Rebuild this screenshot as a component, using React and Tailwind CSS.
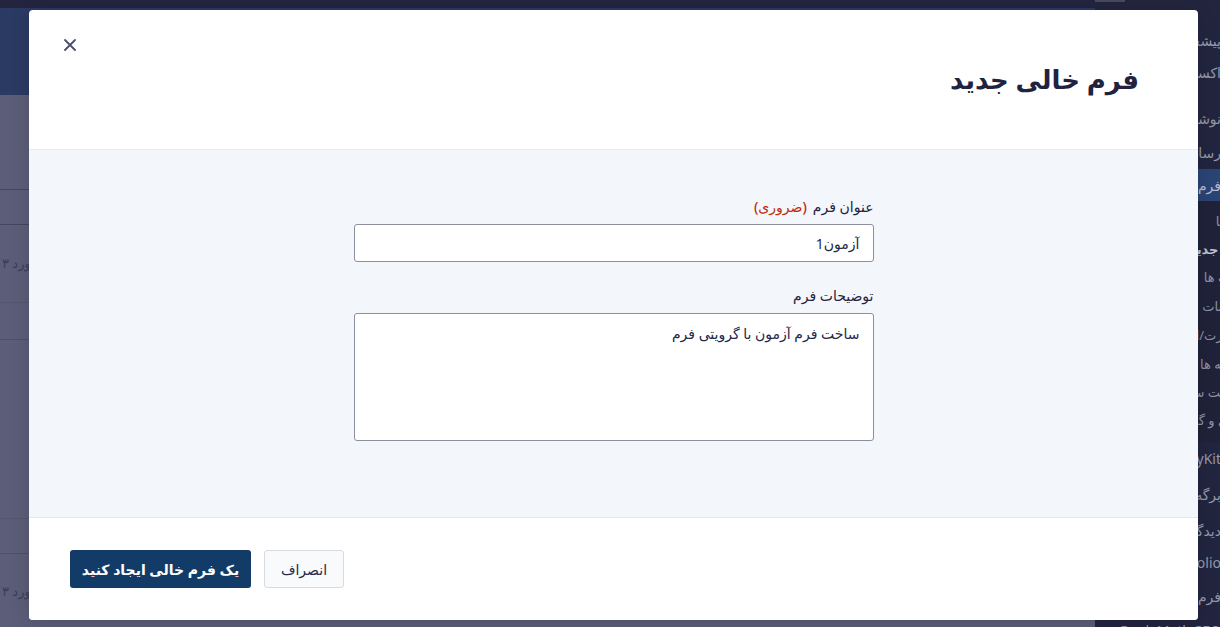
import React from "react";

function SideItem({ children, className = "" }) {
  return (
    <div className={"flex shrink-0 items-center justify-start whitespace-nowrap pr-[39px] text-[14px] text-[#9598ab] " + className}>
      {children}
    </div>
  );
}

function SubItem({ children, className = "h-[28px]" }) {
  return (
    <div className={"flex shrink-0 items-center justify-start whitespace-nowrap pr-[12px] text-[13px] text-[#8e91a5] " + className}>
      {children}
    </div>
  );
}

export default function App() {
  return (
    <div
      className="relative h-[627px] w-[1220px] overflow-hidden bg-[#5c5d78]"
      style={{ fontFamily: "'Noto Sans', 'DejaVu Sans', sans-serif" }}
    >
      {/* background admin page */}
      <div className="flex h-full w-[1260px] flex-col">
        <div className="flex h-[8px] shrink-0 bg-[#23253f]">
          <div className="ml-[1095px] h-[2px] w-[30px] bg-[#484a62]" />
        </div>
        <div className="flex min-h-0 flex-1">
          {/* main area */}
          <div className="flex w-[1095px] shrink-0 flex-col">
            <div className="h-[87px] shrink-0 bg-[#2b3a63]" />
            <div className="flex-1 bg-[#5c5d78]">
              <div className="h-[94px]" />
              <div className="h-[36px] border-y border-[#45465f]" dir="rtl">
                <div className="flex h-full w-[28px] items-center justify-start overflow-visible whitespace-nowrap text-[13px] text-[#3b3d58]">
                  ورودی‌ها
                </div>
              </div>
              <div className="h-[78px] border-b border-[#55566f]" dir="ltr">
                <div className="flex h-full items-center pl-[2px] text-[13px] text-[#3b3d58]">
                  <span dir="rtl">مورد ۳</span>
                </div>
              </div>
              <div className="h-[37px] border-b border-[#4f5069]" />
              <div className="h-[179px] border-b border-[#55566f]" />
              <div className="h-[35px] border-b border-[#4f5069]" />
              <div className="flex h-[76px] items-center pl-[2px] text-[13px] text-[#3b3d58]">
                <span dir="rtl">مورد ۳</span>
              </div>
            </div>
          </div>
          {/* sidebar */}
          <div className="flex w-[165px] shrink-0 flex-col overflow-hidden bg-[#22253f]" dir="rtl">
            <div className="h-[16px] shrink-0" />
            <SideItem className="h-[32px]">پیشخوان</SideItem>
            <SideItem className="h-[32px]">اکسیر</SideItem>
            <div className="h-[13px] shrink-0" />
            <SideItem className="h-[34px]">نوشته‌ها</SideItem>
            <SideItem className="h-[34px]">رسانه</SideItem>
            <SideItem className="h-[32px] bg-[#2b4476] text-[#b9bdd0]">فرم‌ها</SideItem>
            <div className="flex shrink-0 flex-col bg-[#1f2239] py-[7px]">
              <SubItem>فرم‌ها</SubItem>
              <SubItem className="h-[28px] font-bold text-[#bfc2d2]">فرم جدید</SubItem>
              <SubItem>پیامک ها</SubItem>
              <SubItem className="h-[30px]">تنظیمات</SubItem>
              <SubItem>ایمپورت/اکسپورت</SubItem>
              <SubItem className="h-[29px]">افزونه ها</SubItem>
              <SubItem>وضعیت سیستم</SubItem>
              <SubItem>تحلیل و گزارش</SubItem>
            </div>
            <SideItem className="h-[32px]">MyKit</SideItem>
            <SideItem className="h-[40px]">برگه‌ها</SideItem>
            <SideItem className="h-[32px]">دیدگاه‌ها</SideItem>
            <SideItem className="h-[32px]">Portfolio</SideItem>
            <SideItem className="h-[36px]">فرم تماس</SideItem>
            <SideItem className="h-[32px]">Rank Math SEO</SideItem>
          </div>
        </div>
      </div>

      {/* modal */}
      <div
        dir="rtl"
        className="absolute left-[29px] top-[10px] flex h-[610px] w-[1169px] flex-col overflow-hidden rounded-[4px] bg-white shadow-[0_4px_20px_rgba(0,0,0,0.15)]"
      >
        <div className="relative flex h-[140px] shrink-0 items-center border-b border-[#e8ebf1] pr-[59px]">
          <h1 className="mt-[-2px] text-[26px] font-semibold leading-none text-[#1f2340]">فرم خالی جدید</h1>
          <button className="absolute left-[33px] top-[27px] flex h-[16px] w-[16px] items-center justify-center text-[#4a4e6a]" aria-label="close">
            <svg width="12" height="12" viewBox="0 0 12 12" fill="none" stroke="currentColor" strokeWidth="1.8" strokeLinecap="round">
              <path d="M1 1L11 11M11 1L1 11" />
            </svg>
          </button>
        </div>

        <div className="flex flex-1 flex-col items-center bg-[#f3f6fa] pt-[46px]">
          <div className="flex w-[520px] flex-col">
            <label className="mb-[8px] flex h-[20px] items-center gap-[6px] text-[14px] font-medium text-[#1f2340]">
              <span>عنوان فرم</span>
              <span className="text-[#c02b0a]">(ضروری)</span>
            </label>
            <div className="flex h-[38px] items-center rounded-[3px] border border-[#8c8f9e] bg-white px-[13px] text-[14px] text-[#242748]">
              آزمون1
            </div>
            <label className="mb-[8px] mt-[23px] flex h-[20px] items-center text-[14px] font-medium text-[#1f2340]">
              توضیحات فرم
            </label>
            <div className="h-[128px] rounded-[3px] border border-[#8c8f9e] bg-white px-[13px] pt-[9px] text-[14px] text-[#242748]">
              ساخت فرم آزمون با گرویتی فرم
            </div>
          </div>
        </div>

        <div className="flex h-[103px] shrink-0 items-center justify-end gap-[13px] border-t border-[#e3e6ec] bg-white pl-[41px]">
          <button className="flex h-[38px] w-[80px] items-center justify-center rounded-[3px] border border-[#d8dae2] bg-[#f9fafc] text-[14px] font-medium text-[#242748]">
            انصراف
          </button>
          <button className="flex h-[38px] w-[181px] items-center justify-center rounded-[3px] bg-[#123b67] text-[14px] font-bold text-white">
            یک فرم خالی ایجاد کنید
          </button>
        </div>
      </div>
    </div>
  );
}
